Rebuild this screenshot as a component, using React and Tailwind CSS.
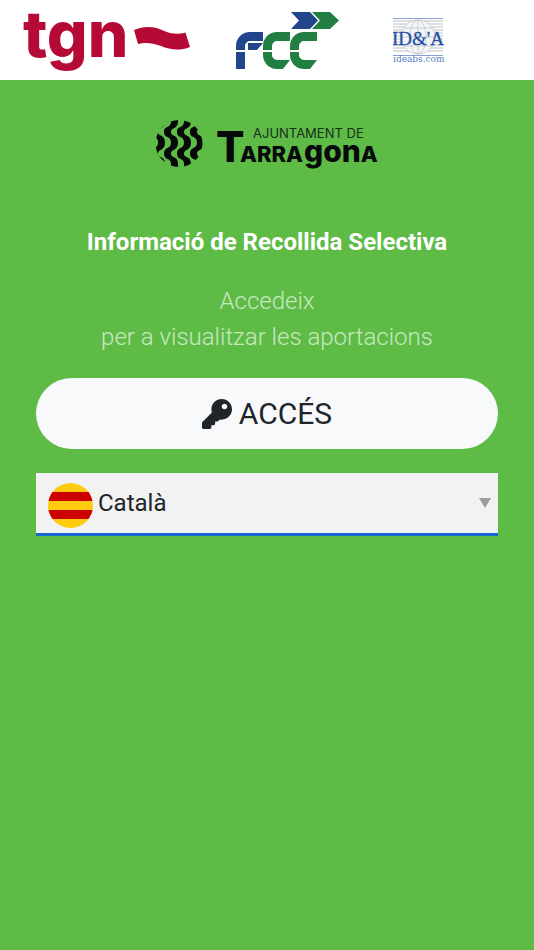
import { FaKey } from "react-icons/fa";

const LANGUAGES = [
  { code: "ca", name: "Català" },
  { code: "es", name: "Castellano" },
  { code: "en", name: "English" },
];

const TgnLogo = () => (
  <svg
    viewBox="0 0 168 60"
    className="w-[168px] h-[60px] overflow-visible"
    role="img"
    aria-label="tgn"
  >
    <text
      x="-1"
      y="45"
      fill="#b60a36"
      fontFamily="Inter, sans-serif"
      fontSize="64"
      fontWeight="800"
    >
      tgn
    </text>
    <path
      d="M110 18C119 14 130 14 138 18C147 22 154 23 161.500 20.500L166 35C156 39 146 38 137 34C128 31 122 30 114 32Z"
      fill="#b60a36"
    />
  </svg>
);

// Marca FCC: barras partidas con esquinas redondeadas y dos flechas encima
const FccLogo = () => (
  <div className="flex flex-col gap-[3px] w-[103px]" role="img" aria-label="FCC">
    <svg viewBox="0 0 48 17" className="w-[48px] h-[17px] self-end">
      <path d="M0 0h19l8 8.500-8 8.500H0l8-8.500z" fill="#21468c" />
      <path d="M21 0h18l9 8.500-9 8.500H21l8-8.500z" fill="#217f42" />
    </svg>
    <div className="flex">
      <div className="flex flex-col gap-[2px]">
        <div className="w-[27px] h-[18px] border-l-9 border-t-9 border-[#21468c] rounded-tl-[14px] pl-[3px] pt-[2px]">
          <div className="h-[7px] bg-[#21468c] [clip-path:polygon(0_0,100%_0,60%_100%,0_100%)]" />
        </div>
        <div className="w-[9px] h-[17px] bg-[#21468c]" />
      </div>
      <FccCurve />
      <FccCurve />
    </div>
  </div>
);

const FccCurve = () => (
  <div className="flex flex-col gap-[2px]">
    <div className="w-[27px] h-[18px] border-l-9 border-t-9 border-[#217f42] rounded-tl-[14px]" />
    <div className="w-[27px] h-[17px] border-l-9 border-b-9 border-[#217f42] rounded-bl-[14px] [clip-path:polygon(0_0,100%_0,100%_47%,74%_100%,0_100%)]" />
  </div>
);

const IdeabsLogo = () => (
  <svg viewBox="0 0 56 50" className="w-[56px] h-[50px]" role="img" aria-label="ideabs.com">
    {[3, 6, 9, 12, 15, 18, 21, 24, 27, 30, 33].map((y) => (
      <path key={y} d={`M0 ${y}h50`} stroke="#d3d5d9" strokeWidth="1.500" />
    ))}
    <g fill="none" stroke="#c3c6cc" strokeWidth="0.800">
      <circle cx="25" cy="19" r="17" fill="#f4f5f7" />
      <ellipse cx="25" cy="19" rx="8" ry="17" />
      <path d="M25 2v34M8 19h34M11 10h28M11 28h28" />
    </g>
    <path d="M0 .5h50M0 37.500h50" stroke="#86a3d8" />
    <text
      x="25"
      y="27"
      textAnchor="middle"
      fill="#2450a4"
      stroke="#2450a4"
      strokeWidth="0.300"
      fontFamily="Liberation Serif, serif"
      fontSize="19"
    >
      ID&amp;'A
    </text>
    <text
      x="0"
      y="44"
      fill="#5b7fc4"
      fontFamily="DejaVu Serif, serif"
      fontSize="9"
    >
      ideabs.com
    </text>
  </svg>
);

const TarragonaLogo = () => (
  <svg
    viewBox="0 0 228 56"
    className="w-[228px] h-[56px] mx-auto overflow-visible"
    role="img"
    aria-label="Ajuntament de Tarragona"
  >
    <clipPath id="mosaic">
      <circle cx="26" cy="23.500" r="23.500" />
    </clipPath>
    <g clipPath="url(#mosaic)" fill="#08090b">
      {[-14, -1, 12, 25, 38].map((x) => (
        <path
          key={x}
          transform={`translate(${x} 0)`}
          d="M6 -5V1C6 9 -1 5 -1 12C-1 19 6 15 6 22.500C6 30 -1 26 -1 33.500C-1 41 6 37 6 44V50H13V44C13 35 6 39 6 33.500C6 29 13 31 13 22.500C13 14 6 17 6 12C6 7 13 10 13 1V-5Z"
        />
      ))}
    </g>
    <text x="100" y="18" fill="#16301a" fontFamily="Inter, sans-serif" fontSize="13">
      AJUNTAMENT DE
    </text>
    <g fill="#08090b" fontFamily="Inter, sans-serif" fontWeight="800">
      <text x="63" y="42" fontSize="42">T</text>
      <text x="87" y="42" fontSize="22">ARRA</text>
      <text x="151" y="42" fontSize="30">
        gon<tspan fontSize="22">A</tspan>
      </text>
    </g>
  </svg>
);

const CatalanFlag = () => (
  <svg viewBox="0 0 45 45" className="w-[45px] h-[45px] shrink-0" aria-hidden="true">
    <clipPath id="flag">
      <circle cx="22.500" cy="22.500" r="22.500" />
    </clipPath>
    <g clipPath="url(#flag)">
      <path d="M0 0h45v45H0z" fill="#ffcb10" />
      <path d="M0 9h45v9H0zM0 27h45v9H0z" fill="#cc0000" />
    </g>
  </svg>
);

const LanguageSelect = () => (
  <div className="flex items-center gap-[5px] h-[63px] pl-3 pr-[7px] pt-1 bg-[#f2f2f2] border-b-3 border-[#1669d2]">
    <CatalanFlag />
    <label htmlFor="language" className="sr-only">
      Idioma
    </label>
    <select
      id="language"
      defaultValue="ca"
      className="flex-1 min-w-0 h-9 mb-1 appearance-none bg-transparent text-2xl text-[#212529] outline-none"
    >
      {LANGUAGES.map((lang) => (
        <option key={lang.code} value={lang.code}>
          {lang.name}
        </option>
      ))}
    </select>
    <svg viewBox="0 0 12 10" className="w-3 h-[10px] mb-1 pointer-events-none" aria-hidden="true">
      <path d="M0 0h12L6 10z" fill="#9c9c9c" />
    </svg>
  </div>
);

export default function App() {
  return (
    <div className="min-h-screen bg-[#5dbb46] font-[Roboto,sans-serif]">
      <header className="flex items-start h-20 pt-3 pl-6 bg-white">
        <TgnLogo />
        <div className="ml-11">
          <FccLogo />
        </div>
        <div className="ml-[54px] mt-[6px]">
          <IdeabsLogo />
        </div>
      </header>

      <main className="px-9 pt-10 text-center">
        <TarragonaLogo />
        <h1 className="mt-12 text-2xl leading-9 font-bold text-white">
          Informació de Recollida Selectiva
        </h1>
        <p className="mt-[23px] text-2xl leading-9 font-light text-white/65">
          Accedeix
          <br />
          per a visualitzar les aportacions
        </p>
        <button
          type="button"
          className="mt-[23px] mb-6 w-full h-[71px] flex items-center justify-center gap-[7px] rounded-full bg-[#f8f9fb] text-3xl text-[#212529]"
        >
          <FaKey />
          ACCÉS
        </button>
        <LanguageSelect />
      </main>
    </div>
  );
}
